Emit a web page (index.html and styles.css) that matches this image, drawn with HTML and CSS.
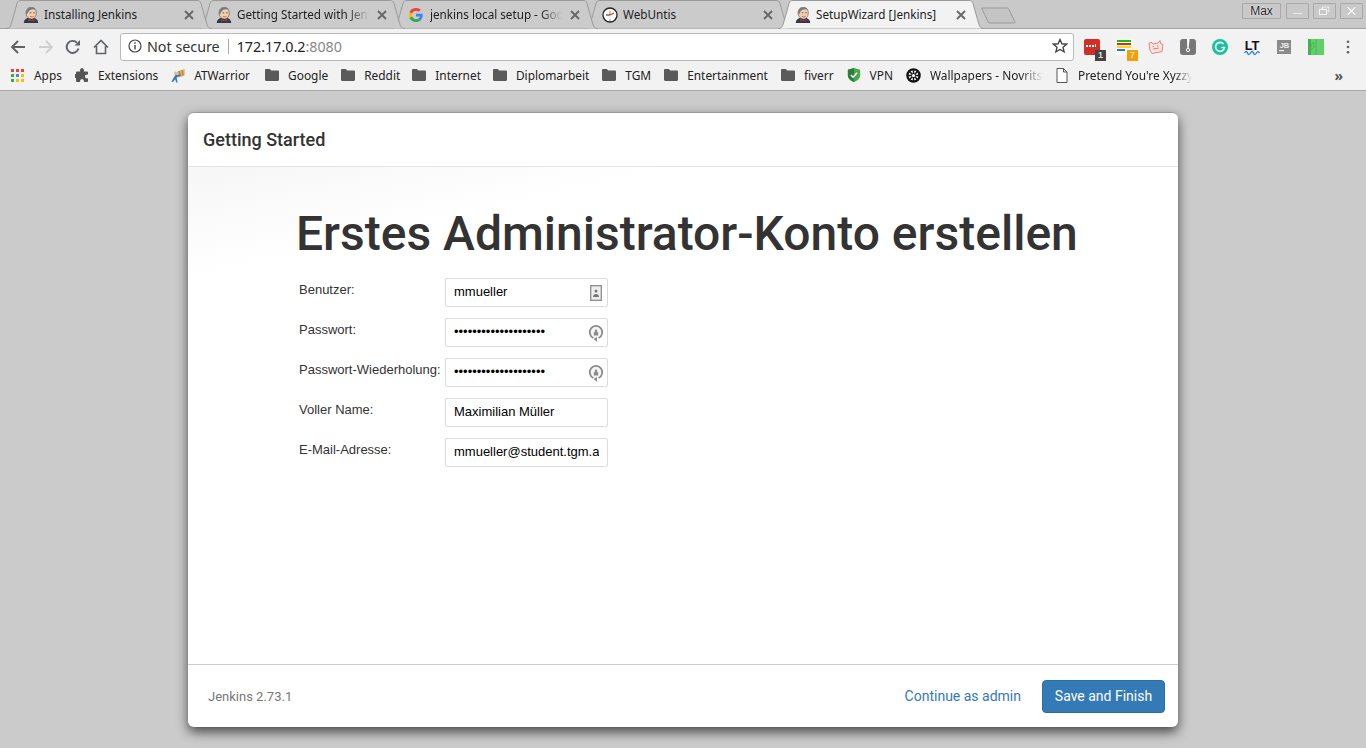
FILE: index.html
```html
<!DOCTYPE html>
<html lang="en">
<head>
<meta charset="utf-8">
<title>SetupWizard [Jenkins]</title>
<link rel="stylesheet" href="styles.css">
</head>
<body>
<svg class="defs" width="0" height="0" aria-hidden="true">
  <defs>
    <symbol id="jenkins" viewBox="0 0 16 16">
      <path d="M.8 16c0-3 1.700-4.300 3.700-5h7c2 .7 3.700 2 3.700 5z" fill="#2f3a4a"/>
      <path d="M3 6.500C3 2.500 5.200.3 8.300.3s5 2.200 5 5.700c0 3.500-2.300 6-4.800 6S3 9.800 3 6.500z" fill="#eecfb0" stroke="#5d5048" stroke-width=".6"/>
      <path d="M3.300 7.500C2.700 3 5 .2 8.300.2c2 0 3.700 1 4.500 2.600C10 1.800 7 2.300 5.700 4.300 5 5.300 4.800 7 3.300 7.500z" fill="#77787a"/>
      <path d="M6.800 5.800h1.400M10.200 5.800h1.400" stroke="#333" stroke-width=".8"/>
      <path d="M7 9.300c1 .7 2.500.7 3.500 0" stroke="#944" stroke-width=".7" fill="none"/>
      <path d="M5 12l3.200 1.100L11.400 12v2.500l-3.200-1-3.200 1z" fill="#c22d2d"/>
    </symbol>
    <symbol id="folder" viewBox="0 0 14 12">
      <path d="M0 1.200C0 .5.500 0 1.200 0h3.600l1.400 1.600h6.600c.7 0 1.200.5 1.200 1.200v8c0 .7-.5 1.200-1.200 1.200H1.200C.5 12 0 11.500 0 10.800z" fill="#5a5a5a"/>
    </symbol>
    <symbol id="pwkey" viewBox="0 0 16 18">
      <path d="M5.400 14A6.300 6.300 0 1 1 10.600 14" fill="#f4f4f4" stroke="#8a8a8a" stroke-width="1.700"/>
      <path d="M5.800 8.200h4.400v3.300H5.800zM6.800 8.200V6.700a1.200 1.200 0 0 1 2.400 0v1.500" fill="#8a8a8a"/>
      <path d="M9 13l-3.500 2L9 17.800z" fill="#8a8a8a"/>
    </symbol>
  </defs>
</svg>

<header class="chrome">
  <div class="tabstrip">
    <div class="tab">
      <svg class="tab-shape" viewBox="0 0 206 29"><path d="M0 28.500C4 28.500 4.500 26 5.500 23L11 3.500C11.700 1.200 13 .5 15 .5H191C193 .5 194.300 1.200 195 3.500L200.500 23C201.500 26 202 28.500 206 28.500"/></svg>
      <svg class="favicon"><use href="#jenkins"/></svg>
      <span class="tab-title">Installing Jenkins</span>
      <svg class="tab-close" viewBox="0 0 10 10"><path d="M1 1l8 8M9 1l-8 8"/></svg>
    </div>
    <div class="tab">
      <svg class="tab-shape" viewBox="0 0 206 29"><path d="M0 28.500C4 28.500 4.500 26 5.500 23L11 3.500C11.700 1.200 13 .5 15 .5H191C193 .5 194.300 1.200 195 3.500L200.500 23C201.500 26 202 28.500 206 28.500"/></svg>
      <svg class="favicon"><use href="#jenkins"/></svg>
      <span class="tab-title tab-title-fade">Getting Started with Jenkins</span>
      <svg class="tab-close" viewBox="0 0 10 10"><path d="M1 1l8 8M9 1l-8 8"/></svg>
    </div>
    <div class="tab">
      <svg class="tab-shape" viewBox="0 0 206 29"><path d="M0 28.500C4 28.500 4.500 26 5.500 23L11 3.500C11.700 1.200 13 .5 15 .5H191C193 .5 194.300 1.200 195 3.500L200.500 23C201.500 26 202 28.500 206 28.500"/></svg>
      <svg class="favicon favicon-small" viewBox="0 0 16 16">
        <path d="M15.700 8.200c0-.6 0-1.100-.1-1.600H8v3h4.300c-.2 1-.7 1.800-1.600 2.400v2h2.600c1.500-1.400 2.400-3.400 2.400-5.800z" fill="#4285f4"/>
        <path d="M8 16c2.200 0 4-.7 5.300-2l-2.600-2c-.7.500-1.600.8-2.700.8-2.100 0-3.900-1.400-4.500-3.300H.6v2.100C2 14.200 4.800 16 8 16z" fill="#34a853"/>
        <path d="M3.500 9.500C3.300 9 3.200 8.500 3.200 8s.1-1 .3-1.500V4.400H.6C.2 5.500 0 6.700 0 8s.2 2.500.6 3.600z" fill="#fbbc05"/>
        <path d="M8 3.200c1.200 0 2.200.4 3.100 1.200l2.300-2.300C12 .8 10.200 0 8 0 4.800 0 2 1.800.6 4.400l2.900 2.100C4.100 4.600 5.900 3.200 8 3.200z" fill="#ea4335"/>
      </svg>
      <span class="tab-title tab-title-fade">jenkins local setup - Google Search</span>
      <svg class="tab-close" viewBox="0 0 10 10"><path d="M1 1l8 8M9 1l-8 8"/></svg>
    </div>
    <div class="tab">
      <svg class="tab-shape" viewBox="0 0 206 29"><path d="M0 28.500C4 28.500 4.500 26 5.500 23L11 3.500C11.700 1.200 13 .5 15 .5H191C193 .5 194.300 1.200 195 3.500L200.500 23C201.500 26 202 28.500 206 28.500"/></svg>
      <svg class="favicon" viewBox="0 0 16 16">
        <circle cx="8" cy="8" r="7" fill="#fff" stroke="#222" stroke-width="1.300"/>
        <path d="M8 8V3.500" stroke="#e8a020" stroke-width="1.200"/>
        <path d="M8 8l4-2" stroke="#d93025" stroke-width="1.200"/>
        <path d="M8 8H4" stroke="#222" stroke-width="1"/>
        <circle cx="8" cy="13" r=".6" fill="#222"/>
      </svg>
      <span class="tab-title">WebUntis</span>
      <svg class="tab-close" viewBox="0 0 10 10"><path d="M1 1l8 8M9 1l-8 8"/></svg>
    </div>
    <div class="tab tab-active">
      <svg class="tab-shape" viewBox="0 0 206 29"><path d="M0 28.500C4 28.500 4.500 26 5.500 23L11 3.500C11.700 1.200 13 .5 15 .5H191C193 .5 194.300 1.200 195 3.500L200.500 23C201.500 26 202 28.500 206 28.500"/></svg>
      <svg class="favicon"><use href="#jenkins"/></svg>
      <span class="tab-title">SetupWizard [Jenkins]</span>
      <svg class="tab-close" viewBox="0 0 10 10"><path d="M1 1l8 8M9 1l-8 8"/></svg>
    </div>
    <svg class="newtab" viewBox="0 0 35 17"><path d="M1 1H26C27 1 27.500 1.500 28 2.500L34 15C34.300 15.700 34 16 33 16H9C8 16 7.500 15.700 7.200 15L1 2C.7 1.300.5 1 1 1z"/></svg>
    <div class="win-controls">
      <div class="win-btn win-user">Max</div>
      <div class="win-btn"><svg viewBox="0 0 23 16"><path class="win-glyph" d="M6 10.500h11"/></svg></div>
      <div class="win-btn"><svg viewBox="0 0 23 16"><path class="win-glyph" d="M9 5V3.500h7.500V9H15M6 6h8v6H6z"/></svg></div>
      <div class="win-btn"><svg viewBox="0 0 23 16"><path class="win-glyph win-glyph-x" d="M7 3.500l9 9M16 3.500l-9 9"/></svg></div>
    </div>
  </div>

  <div class="toolbar">
    <svg class="nav-icon" viewBox="0 0 16 16"><path class="nav-stroke" d="M15 8H2M8 2L2 8l6 6"/></svg>
    <svg class="nav-icon nav-disabled" viewBox="0 0 16 16"><path class="nav-stroke" d="M1 8h13M8 2l6 6-6 6"/></svg>
    <svg class="nav-icon" viewBox="0 0 16 16"><path class="nav-stroke" d="M13.500 9.500A6 6 0 1 1 12 3.700"/><path d="M9.500 6.500h5.500V1z" fill="#5f6368"/></svg>
    <svg class="nav-icon" viewBox="0 0 16 16"><path class="nav-stroke nav-thin" d="M1 8.500L8 1.500l7 7M3.500 7v7.500h9V7"/></svg>
    <div class="omnibox">
      <svg class="info" viewBox="0 0 14 14"><circle cx="7" cy="7" r="6" fill="none" stroke="#444" stroke-width="1.200"/><path d="M6.300 6h1.400v4.500H6.300zM6.300 3.300h1.400v1.400H6.300z" fill="#444"/></svg>
      <span class="not-secure">Not secure</span>
      <span class="omni-sep"></span>
      <span class="url">172.17.0.2<span class="url-port">:8080</span></span>
      <svg class="star" viewBox="0 0 16 16"><path d="M8 1.500l1.900 4.300 4.700.4-3.600 3.100 1.100 4.600L8 11.500l-4.100 2.400L5 9.300 1.400 6.200l4.700-.4z" fill="none" stroke="#444" stroke-width="1.400"/></svg>
    </div>
    <div class="ext-row">
      <div class="ext">
        <svg viewBox="0 0 16 16"><rect width="16" height="16" rx="2" fill="#d32d27"/><path d="M2 6h2v2H2zM5 6h2v2H5zM8 6h2v2H8zM11 5h1v3h-1z" fill="#fff"/></svg>
        <span class="badge badge-dark">1</span>
      </div>
      <div class="ext">
        <svg viewBox="0 0 16 16"><path fill="#fff" d="M0 0h16v16H0z"/><path fill="#0c0" d="M1 1h14v2H1z"/><path fill="#e22" d="M1 4h14v2H1z"/><path fill="#fd0" d="M1 7h14v2H1z"/><path fill="#27d" d="M1 10h8v2H1z"/></svg>
        <span class="badge badge-orange">7</span>
      </div>
      <div class="ext">
        <svg viewBox="0 0 16 16"><path d="M1 4l3-.5 1 1.500 5-1 2-2.500.5 3 2.500 1-1 7-10 2-2-3z" fill="#fbe6e4" stroke="#e2837c" stroke-width="1"/><path d="M4.500 7.500h1.500M9 7h1.500M5 10l5.500-.8" stroke="#e2837c" stroke-width="1.200" fill="none"/></svg>
      </div>
      <div class="ext">
        <svg viewBox="0 0 16 16"><rect width="16" height="16" rx="3" fill="#777"/><path d="M7 0h2.500L8.700 9H7.300z" fill="#fff"/><circle cx="8" cy="11" r="1.600" fill="none" stroke="#fff"/></svg>
      </div>
      <div class="ext">
        <svg viewBox="0 0 16 16"><circle cx="8" cy="8" r="8" fill="#15c39a"/><path d="M11.500 5A4.500 4.500 0 1 0 12.500 8.500H9.500" fill="none" stroke="#fff" stroke-width="1.700"/></svg>
      </div>
      <div class="ext">
        <svg viewBox="0 0 16 16"><text class="ext-lt" x="8" y="11" text-anchor="middle">LT</text><path d="M.5 14c1.200-2 2.200-2 3 0s1.800 2 3 0 2.200-2 3 0 1.800 2 3 0 1.800-1.500 3 0" fill="none" stroke="#2a7de1" stroke-width="1.300"/></svg>
      </div>
      <div class="ext">
        <svg viewBox="0 0 16 16"><rect x="1" y="1" width="14" height="14" fill="#8a8a8a"/><text class="ext-jb" x="8.500" y="8.500" text-anchor="middle">JB</text><path d="M3 11h5v1.200H3z" fill="#eee"/></svg>
      </div>
      <div class="ext">
        <svg viewBox="0 0 16 16"><rect width="16" height="16" fill="#63cf6b"/><path d="M0 0h3v16H0z" fill="#3eb54a"/><path d="M3 6l3-3v5l-3 3zM8 0v16" stroke="#49bb53" fill="none"/></svg>
      </div>
      <svg class="menu-dots" viewBox="0 0 4 16"><circle cx="2" cy="2" r="1.500"/><circle cx="2" cy="8" r="1.500"/><circle cx="2" cy="14" r="1.500"/></svg>
    </div>
  </div>

  <nav class="bookmarks">
    <a class="bm">
      <svg class="bm-icon bm-apps" viewBox="0 0 13 13"><path fill="#ea4335" d="M0 0h3v3H0zM5 0h3v3H5z"/><path fill="#ea4335" d="M10 0h3v3h-3z"/><path fill="#fbbc05" d="M10 5h3v3h-3zM5 10h3v3H5zM10 10h3v3h-3z"/><path fill="#34a853" d="M0 5h3v3H0zM0 10h3v3H0z"/><path fill="#4285f4" d="M5 5h3v3H5z"/></svg>
      <span>Apps</span>
    </a>
    <a class="bm">
      <svg class="bm-icon" viewBox="0 0 14 14"><path fill="#555" d="M5 2.500C5 1 6 0 7 0s2 1 2 2.500c0 .4-.1.700-.2 1H12c.5 0 1 .5 1 1v2.200c-.3-.1-.6-.2-1-.2-1.200 0-2 .8-2 2s.8 2 2 2c.4 0 .7-.1 1-.2V13c0 .5-.5 1-1 1H9v-.5C9 12 8 11 7 11s-2 1-2 2.500v.5H2c-.5 0-1-.5-1-1V9.800c-.3.100-.6.200-1 .2V6c.4 0 .7.100 1 .2V4.500c0-.5.500-1 1-1h3.200C5.100 3.200 5 2.900 5 2.500z"/></svg>
      <span>Extensions</span>
    </a>
    <a class="bm bm-tight">
      <svg class="bm-icon bm-wide" viewBox="0 0 15 16"><path d="M6 4L14 1v7l-7 2z" fill="#d8ad70"/><path d="M8 3l2 6M11 2l1.500 6" stroke="#a67c40"/><circle cx="4.500" cy="5.500" r="1.700" fill="#e8b98c"/><path d="M4.500 7L2 11l-2 4h1.500l2.500-3 1 3.500h1.500L5.500 10l4-2-.5-1-3 .5z" fill="#3b76b8"/></svg>
      <span>ATWarrior</span>
    </a>
    <a class="bm"><svg class="bm-icon"><use href="#folder"/></svg><span>Google</span></a>
    <a class="bm bm-snug"><svg class="bm-icon"><use href="#folder"/></svg><span>Reddit</span></a>
    <a class="bm bm-snug"><svg class="bm-icon"><use href="#folder"/></svg><span>Internet</span></a>
    <a class="bm"><svg class="bm-icon"><use href="#folder"/></svg><span>Diplomarbeit</span></a>
    <a class="bm"><svg class="bm-icon"><use href="#folder"/></svg><span>TGM</span></a>
    <a class="bm"><svg class="bm-icon"><use href="#folder"/></svg><span>Entertainment</span></a>
    <a class="bm"><svg class="bm-icon"><use href="#folder"/></svg><span>fiverr</span></a>
    <a class="bm">
      <svg class="bm-icon" viewBox="0 0 14 16"><path d="M7 0l7 2v6c0 4-3 6.500-7 8-4-1.500-7-4-7-8V2z" fill="#4aa84a"/><path d="M7 0v16C3 14.500 0 12 0 8V2z" fill="#2e7d3a"/><path d="M3.500 8l2.500 2.500L10.500 5.500" stroke="#fff" stroke-width="1.800" fill="none"/></svg>
      <span>VPN</span>
    </a>
    <a class="bm">
      <svg class="bm-icon bm-wide" viewBox="0 0 16 16"><circle cx="8" cy="8" r="6.500" fill="#fff" stroke="#111" stroke-width="2.500"/><path d="M8 1.500v13M1.500 8h13M3.500 3.500l9 9M12.500 3.500l-9 9" stroke="#111" stroke-width="1.600"/><circle cx="8" cy="8" r="1.700" fill="#fff"/></svg>
      <span class="bm-fade bm-fade-wall">Wallpapers - Novritsch</span>
    </a>
    <a class="bm bm-doc">
      <svg class="bm-icon bm-icon-doc" viewBox="0 0 12 15"><path d="M1 .5h6.500l3.500 3.500v10.500H1zM7.500.5V4H11" fill="#fff" stroke="#555"/></svg>
      <span class="bm-fade bm-fade-xyz">Pretend You're Xyzzy</span>
    </a>
    <span class="bm-more">»</span>
  </nav>
</header>

<main class="page">
  <section class="card">
    <div class="card-header">Getting Started</div>
    <div class="card-body">
      <h1 class="title">Erstes Administrator-Konto erstellen</h1>
      <form class="form">
        <div class="row">
          <label class="label">Benutzer:</label>
          <div class="field">
            <input class="input" type="text" value="mmueller" readonly>
            <svg class="field-icon" viewBox="0 0 12 16"><rect x=".7" y=".7" width="10.600" height="14.600" fill="#eee" stroke="#8d8d8d" stroke-width="1.300"/><circle cx="6" cy="6" r="1.500" fill="#777"/><path d="M3 12c0-2 1.300-3 3-3s3 1 3 3z" fill="#777"/></svg>
          </div>
        </div>
        <div class="row">
          <label class="label">Passwort:</label>
          <div class="field">
            <input class="input" type="password" value="aaaaaaaaaaaaaaaaaaaa" readonly>
            <svg class="field-icon field-icon-key"><use href="#pwkey"/></svg>
          </div>
        </div>
        <div class="row">
          <label class="label">Passwort-Wiederholung:</label>
          <div class="field">
            <input class="input" type="password" value="aaaaaaaaaaaaaaaaaaaa" readonly>
            <svg class="field-icon field-icon-key"><use href="#pwkey"/></svg>
          </div>
        </div>
        <div class="row">
          <label class="label">Voller Name:</label>
          <div class="field"><input class="input" type="text" value="Maximilian Müller" readonly></div>
        </div>
        <div class="row">
          <label class="label">E-Mail-Adresse:</label>
          <div class="field"><input class="input" type="text" value="mmueller@student.tgm.ac.at" readonly></div>
        </div>
      </form>
    </div>
    <footer class="card-footer">
      <span class="version">Jenkins 2.73.1</span>
      <a class="link">Continue as admin</a>
      <button class="btn" type="button">Save and Finish</button>
    </footer>
  </section>
</main>
</body>
</html>
```

FILE: styles.css
```css
* { box-sizing: border-box; }
html, body { height: 100%; margin: 0; overflow: hidden; }
body {
  display: flex;
  flex-direction: column;
  background: #cbcbcb;
  font-family: "Noto Sans", sans-serif;
  color: #333;
}
.defs { position: absolute; }

/* browser chrome */
.chrome { flex: none; background: #f2f2f2; border-bottom: 1px solid #a9a9a9; }
.tabstrip {
  position: relative;
  display: flex;
  align-items: stretch;
  height: 29px;
  padding-left: 6px;
  background: #c9c9c9;
  border-bottom: 1px solid #a3a3a3;
}
.tab {
  position: relative;
  display: flex;
  align-items: center;
  flex: none;
  width: 206px;
  height: 29px;
  margin-right: -13px;
  padding: 0 18px 0 17px;
  font-size: 11.700px;
  color: #222;
}
.tab:nth-child(1) { z-index: 4; }
.tab:nth-child(2) { z-index: 3; }
.tab:nth-child(3) { z-index: 2; }
.tab:nth-child(4) { z-index: 1; }
.tab-active { z-index: 5; }
.tab-shape { position: absolute; inset: 0; width: 206px; height: 29px; }
.tab-shape path { fill: #cbcbcb; stroke: #9a9a9a; stroke-width: 1; }
.tab-active .tab-shape path { fill: #f2f2f2; }
.favicon { position: relative; flex: none; width: 16px; height: 16px; margin-right: 5px; }
.favicon-small { width: 14px; height: 14px; margin-right: 7px; }
.tab-title { position: relative; flex: 1; min-width: 0; padding-bottom: 2px; white-space: nowrap; overflow: hidden; }
.tab-title-fade { -webkit-mask-image: linear-gradient(to right, #000 84%, transparent 100%); mask-image: linear-gradient(to right, #000 84%, transparent 100%); }
.tab-close { position: relative; flex: none; width: 10px; height: 10px; margin-left: 8px; }
.tab-close path { stroke: #666; stroke-width: 1.800; fill: none; }
.newtab { position: relative; z-index: 0; flex: none; width: 35px; height: 17px; margin: 7px 0 0 10px; }
.newtab path { fill: #c4c4c4; stroke: #9a9a9a; }
.win-controls { display: flex; gap: 4px; margin: 3px 3px 0 auto; }
.win-btn {
  width: 23px;
  height: 16px;
  background: #c9c9c9;
  border: 1px solid #a8a8a8;
  border-radius: 1px;
  font: 12px/14px "Liberation Sans", sans-serif;
  text-align: center;
  color: #222;
}
.win-btn svg { display: block; width: 21px; height: 14px; }
.win-user { width: 39px; margin-right: 1px; text-shadow: 0 0 1px #fff, 0 0 1px #fff; }
.win-glyph { fill: none; stroke: #f6f6f6; stroke-width: 1.600; filter: drop-shadow(0 0 .6px #777); }
.win-glyph-x { stroke-width: 2.200; }

.toolbar { display: flex; align-items: center; height: 32px; padding: 4px 0 0 10px; }
.nav-icon { flex: none; width: 16px; height: 16px; margin-right: 11.500px; }
.nav-stroke { fill: none; stroke: #5f6368; stroke-width: 1.900; }
.nav-thin { stroke-width: 1.600; }
.nav-disabled .nav-stroke { stroke: #cfcfcf; }
.omnibox {
  display: flex;
  align-items: center;
  flex: none;
  width: 954px;
  height: 28px;
  padding: 0 5px 2px 7px;
  background: #fff;
  border: 1px solid #b9b9b9;
  border-radius: 3px;
  font-size: 14.300px;
}
.info { flex: none; width: 14px; height: 14px; margin-right: 5px; }
.not-secure { color: #333; }
.omni-sep { width: 1px; height: 15px; margin: 0 8px; background: #aaa; }
.url { color: #222; }
.url-port { color: #888; }
.star { flex: none; width: 16px; height: 16px; margin-left: auto; }
.ext-row { display: flex; align-items: center; margin-left: 2px; }
.ext { position: relative; flex: none; width: 32px; height: 16px; padding-left: 8px; }
.ext svg { display: block; width: 16px; height: 16px; overflow: visible; }
.ext-lt { font: bold 12.800px "Liberation Sans", sans-serif; fill: #111; }
.ext-jb { font: bold 7.500px "Liberation Sans", sans-serif; fill: #eee; }
.badge {
  position: absolute;
  left: 19px;
  top: 11px;
  width: 11px;
  height: 11px;
  font: bold 9px/11px "Liberation Sans", sans-serif;
  text-align: center;
  color: #ddd;
}
.badge-dark { background: #444; }
.badge-orange { background: #f5a000; }
.menu-dots { flex: none; width: 4px; height: 14px; margin-left: 14px; fill: #5f6368; }

.bookmarks { display: flex; align-items: center; height: 29px; padding: 0 0 1px 11px; font-size: 11.900px; color: #222; }
.bm { display: flex; align-items: center; gap: 9px; flex: none; margin-right: 13px; white-space: nowrap; }
.bm-tight { gap: 8px; margin-right: 15px; }
.bm-snug { margin-right: 12px; }
.bm-icon { flex: none; width: 14px; height: 14px; }
.bm-wide { width: 15px; height: 15px; }
.bm-apps { width: 13px; height: 13px; margin-right: 1px; }
.bm-fade { overflow: hidden; }
.bm-fade-wall { width: 113px; -webkit-mask-image: linear-gradient(to right, #000 80%, transparent); mask-image: linear-gradient(to right, #000 80%, transparent); }
.bm-doc { gap: 10px; }
.bm-icon-doc { width: 12px; height: 15px; }
.bm-fade-xyz { width: 114px; -webkit-mask-image: linear-gradient(to right, #000 85%, transparent); mask-image: linear-gradient(to right, #000 85%, transparent); }
.bm-more { margin: 0 23px 0 auto; font-size: 14px; font-weight: bold; color: #555; }

/* page */
.page { flex: 1; min-height: 0; padding-top: 21px; }
.card {
  display: flex;
  flex-direction: column;
  width: 990px;
  height: 615px;
  margin: 0 auto;
  background: #fff;
  border-radius: 6px;
  box-shadow: 0 5px 12px rgba(0, 0, 0, .65);
  overflow: hidden;
  border-top: 1px solid #999;
  font-family: Roboto, sans-serif;
}
.card-header {
  flex: none;
  height: 54px;
  padding: 14px 15px 0;
  border-bottom: 1px solid #e5e5e5;
  font-size: 18px;
  font-weight: 500;
  line-height: 26px;
  color: #333;
}
.card-body {
  flex: 1;
  min-height: 0;
  padding: 36px 0 0 108px;
  background: linear-gradient(167deg, #f6f6f6, #fff 110px);
}
.title {
  margin: 0 0 14px;
  font-size: 48px;
  font-weight: 500;
  line-height: 61px;
  color: #333;
  white-space: nowrap;
}
.form { display: flex; flex-direction: column; gap: 11px; padding-left: 3px; }
.row { display: flex; align-items: flex-start; }
.label {
  flex: none;
  width: 146px;
  padding-top: 4px;
  font: 13px/16px "Liberation Sans", sans-serif;
  color: #333;
  white-space: nowrap;
}
.field { position: relative; flex: none; width: 163px; height: 29px; }
.input {
  display: block;
  width: 100%;
  height: 100%;
  padding: 0 8px 2px;
  background: #fff;
  border: 1px solid #dcdcdc;
  border-radius: 2px;
  font: 13px "Liberation Sans", sans-serif;
  color: #000;
  outline: none;
}
.field-icon { position: absolute; right: 6px; top: 7px; width: 12px; height: 16px; }
.field-icon-key { right: 4px; top: 6px; width: 16px; height: 18px; }
.card-footer {
  display: flex;
  align-items: center;
  flex: none;
  height: 63px;
  padding: 0 13px 0 20px;
  border-top: 1px solid #ccc;
  font-size: 14px;
}
.version { margin-right: auto; font-size: 13px; color: #777; }
.link { margin-right: 21px; color: #337ab7; }
.btn {
  width: 123px;
  height: 33px;
  padding: 0;
  background: #337ab7;
  border: 1px solid #2e6da4;
  border-radius: 4px;
  font: 14px Roboto, sans-serif;
  color: #fff;
}
```
